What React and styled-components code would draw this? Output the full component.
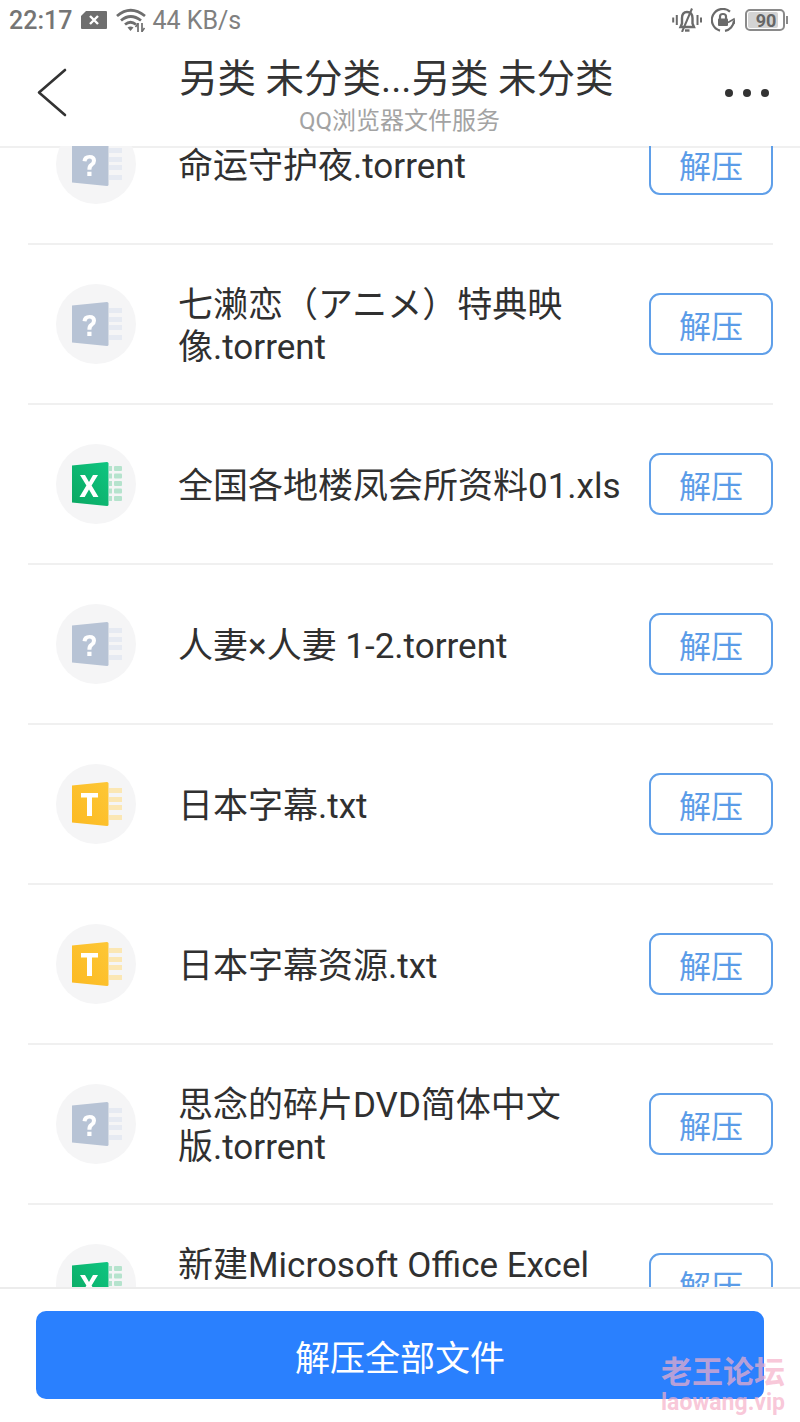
import React from 'react';
import styled, { createGlobalStyle } from 'styled-components';

const Global = createGlobalStyle`
  html, body { margin: 0; padding: 0; background: #fff; }
  * { box-sizing: border-box; }
`;
const FONT = `Roboto, "Noto Sans CJK SC", "Noto Sans CJK JP", sans-serif`;

const Page = styled.div`
  position: relative; width: 800px; height: 1422px; overflow: hidden;
  display: flex; flex-direction: column; background: #fff; font-family: ${FONT};
`;
const StatusBar = styled.div`
  height: 40px; flex: none; display: flex; align-items: center; justify-content: space-between;
  padding: 0 15px 0 9px; color: #757575;
`;
const StatusGroup = styled.div`display: flex; align-items: center; gap: ${p => p.$gap}px;`;
const Clock = styled.span`font-size: 25px; font-weight: 500;`;
const Speed = styled.span`font-size: 25px; color: #808080; margin-left: -2px;`;
const Header = styled.header`
  flex: none; height: 108px; display: flex; align-items: flex-start;
  border-bottom: 2px solid #f0f0f0; background: #fff;
`;
const BackButton = styled.div`width: 179px; padding: 28px 0 0 37px; flex: none;`;
const TitleBlock = styled.div`width: 441px; flex: none; display: flex; flex-direction: column; align-items: center;`;
const Title = styled.div`font-size: 38.5px; line-height: 44px; color: #333; margin-top: 17px; white-space: nowrap; width: 100%;`;
const Subtitle = styled.div`font-size: 24px; line-height: 28px; color: #a3a3a3; margin-top: 6px;`;
const More = styled.div`display: flex; gap: 10px; margin: 49px 0 0 105px;`;
const Dot = styled.span`width: 8px; height: 8px; border-radius: 50%; background: #333;`;
const List = styled.main`flex: 1; min-height: 0; overflow: hidden; margin-top: -2px;`;
const ListInner = styled.div`margin-top: -61px; padding: 0 27px 0 28px;`;
const Row = styled.div`
  height: 160px; display: flex; align-items: center; border-bottom: 2px solid #f0f0f0;
`;
const IconWrap = styled.div`width: 80px; height: 80px; flex: none; margin-left: 28px; display: flex;`;
const Name = styled.div`
  width: 445px; margin: 6px 0 0 42px; flex: none; font-size: 35px; line-height: 42px; color: #303030;
`;
const Extract = styled.div`
  width: 124px; height: 62px; flex: none; margin-left: 26px; border: 2px solid #5f9fe9; border-radius: 11px;
  display: flex; align-items: center; justify-content: center; color: #5b9ce8; font-size: 32px;
`;
const Footer = styled.footer`
  flex: none; height: 135px; padding: 22px 36px 0; border-top: 2px solid #ececec; background: #fff;
`;
const ExtractAll = styled.div`
  height: 88px; background: #2a80fe; border-radius: 10px; color: #fff; font-size: 35px;
  display: flex; align-items: center; justify-content: center;
`;
const Watermark = styled.div`
  position: absolute; left: 662px; top: 1355px; display: flex; flex-direction: column; align-items: center;
  color: rgba(246, 175, 200, 0.7); font-weight: 700; width: 122px;
`;
const MarkTitle = styled.div`font-size: 31px; line-height: 36px; white-space: nowrap;`;
const MarkSub = styled.div`font-size: 23px; line-height: 28px; white-space: nowrap; margin-top: -2px;`;

const DOC = {
  unknown: ['#b7c3d5', '#b7c3d5', '#e6eaf2'],
  excel: ['#0fc581', '#0ba862', '#b5e3cd'],
  text: ['#fdc736', '#fcba22', '#fbe7b4'],
};

function FileIcon({ kind }) {
  const [top, bottom, line] = DOC[kind];
  const ys = kind === 'excel' ? [22, 29.5, 37, 44.5, 52] : [24, 33, 41, 51];
  const gid = `doc-${kind}`;
  return (
    <svg width="80" height="80" viewBox="0 0 80 80">
      <defs>
        <linearGradient id={gid} x1="1" y1="0" x2="0" y2="1">
          <stop offset="0" stopColor={top} />
          <stop offset="1" stopColor={bottom} />
        </linearGradient>
      </defs>
      <circle cx="40" cy="40" r="40" fill="#f5f5f6" />
      {kind === 'excel'
        ? ys.map(y => (
            <g key={y} fill={line}>
              <rect x="53" y={y} width="3" height="5" />
              <rect x="58" y={y} width="8" height="5" rx="1" />
            </g>
          ))
        : ys.map(y => <rect key={y} x="53" y={y} width="13" height="5" fill={line} />)}
      <path d="M16 21.5 L51 18 Q52.5 18 52.5 19.5 V60.5 Q52.5 62 51 62 L16 58.5 Z" fill={`url(#${gid})`} />
      {kind === 'unknown' && (
        <path d="M26.5 37 Q27 31 33.5 31 Q40 31 40 36.8 Q40 40 37 42 Q35.4 43.2 35.4 45.8 H31.4 Q31.2 41.4 34 39.6 Q36 38.2 36 36.8 Q36 34.6 33.5 34.6 Q31 34.6 30.5 37.6 Z M31.3 47.8 H35.5 V52 H31.3 Z" fill="#fff" />
      )}
      {kind === 'excel' && (
        <path d="M24 31 H29 L33 38 L37 31 H42 L35.6 41.5 L42.5 53 H37.3 L33 45.5 L28.7 53 H23.5 L30.4 41.5 Z" fill="#fff" />
      )}
      {kind === 'text' && <path d="M25 29 H42 V33.5 H36 V52 H31 V33.5 H25 Z" fill="#fff" />}
    </svg>
  );
}

const Back = () => (
  <svg width="32" height="50" viewBox="0 0 32 50" fill="none" stroke="#333" strokeWidth="2.6" strokeLinecap="round" strokeLinejoin="round">
    <path d="M28 2 L2 24.5 L28 47" />
  </svg>
);
const SimX = () => (
  <svg width="28" height="20" viewBox="0 0 28 20">
    <path d="M6 1 H26 Q27 1 27 2 V18 Q27 19 26 19 H2 Q1 19 1 18 V6 Z" fill="#6e6e6e" />
    <path d="M10 6 L18 14 M18 6 L10 14" stroke="#fff" strokeWidth="2.4" />
  </svg>
);
const Wifi = () => (
  <svg width="30" height="24" viewBox="0 0 30 24" fill="none" stroke="#6e6e6e" strokeWidth="2.8">
    <path d="M1 8 Q14.5 -3.5 29 8" />
    <path d="M5 12.5 Q14.5 4.5 25 12.5" />
    <path d="M9 16.5 Q14.5 12 20 16.5" />
    <path d="M11.5 19.5 L14.5 23 L17.5 19.5 Q14.5 17.5 11.5 19.5 Z" fill="#6e6e6e" stroke="none" />
    <path d="M22 15 V24 M26 15 V24" strokeWidth="1.7" />
    <path d="M19.5 19 L22 15.5 M28.5 20 L26 23.5" strokeWidth="1.5" />
  </svg>
);
const Bell = () => (
  <svg width="30" height="24" viewBox="0 0 30 24" fill="none" stroke="#6a6a6a" strokeWidth="2.4">
    <path d="M8.5 19 H22 L20.5 15.5 V10 Q20.5 4 15 4 Q10 4 10 10 V15.5 Z" />
    <path d="M13 22.5 H17.5" />
    <path d="M20 0.5 L10 24" strokeWidth="2" />
    <path d="M4.8 7 V17 M1.2 9.5 V14.5 M25.5 7 V17 M29 9.5 V14.5" strokeWidth="2" />
  </svg>
);
const RotateLock = () => (
  <svg width="24" height="24" viewBox="0 0 24 24" fill="none" stroke="#6a6a6a" strokeWidth="2.2">
    <path d="M19 3.6 A11 11 0 1 0 9 22.6" />
    <path d="M14 22.8 A11 11 0 0 0 22.9 13" />
    <path d="M17 14.5 L23 11 L24 16" strokeWidth="1.5" />
    <rect x="7" y="10.5" width="10" height="7.5" rx="1" fill="#6a6a6a" stroke="none" />
    <path d="M9 11 V8.5 Q9 6 12 6 Q15 6 15 8.5 V11" />
  </svg>
);
const BatteryBody = styled.div`
  position: relative; width: 40px; height: 22px; margin-left: 1px; border: 2px solid #8a8a8a; border-radius: 5px; padding: 1px;
  display: flex; align-items: stretch;
  &::after { content: ''; position: absolute; right: -5px; top: 5px; width: 2px; height: 8px; background: #8a8a8a; }
`;
const BatteryFill = styled.div`
  flex: none; background: #d4d4d4; border-radius: 2px; display: flex; align-items: center; justify-content: center;
  font-size: 18px; font-weight: 700; color: #666; width: 30px; padding-left: 6px;
`;

const FILES = [
  ['unknown', '命运守护夜.torrent'],
  ['unknown', '七濑恋（アニメ）特典映像.torrent'],
  ['excel', '全国各地楼凤会所资料01.xls'],
  ['unknown', '人妻×人妻 1-2.torrent'],
  ['text', '日本字幕.txt'],
  ['text', '日本字幕资源.txt'],
  ['unknown', '思念的碎片DVD简体中文版.torrent'],
  ['excel', '新建Microsoft Office Excel 工作表.xlsx'],
];

export default function App() {
  return (
    <Page>
      <Global />
      <StatusBar>
        <StatusGroup $gap={8}>
          <Clock>22:17</Clock>
          <SimX />
          <Wifi />
          <Speed>44 KB/s</Speed>
        </StatusGroup>
        <StatusGroup $gap={9}>
          <Bell />
          <RotateLock />
          <BatteryBody><BatteryFill>90</BatteryFill></BatteryBody>
        </StatusGroup>
      </StatusBar>
      <Header>
        <BackButton><Back /></BackButton>
        <TitleBlock>
          <Title>另类 未分类...另类 未分类</Title>
          <Subtitle>QQ浏览器文件服务</Subtitle>
        </TitleBlock>
        <More><Dot /><Dot /><Dot /></More>
      </Header>
      <List>
        <ListInner>
          {FILES.map(([kind, name]) => (
            <Row key={name}>
              <IconWrap><FileIcon kind={kind} /></IconWrap>
              <Name>{name}</Name>
              <Extract>解压</Extract>
            </Row>
          ))}
        </ListInner>
      </List>
      <Footer><ExtractAll>解压全部文件</ExtractAll></Footer>
      <Watermark>
        <MarkTitle>老王论坛</MarkTitle>
        <MarkSub>laowang.vip</MarkSub>
      </Watermark>
    </Page>
  );
}
